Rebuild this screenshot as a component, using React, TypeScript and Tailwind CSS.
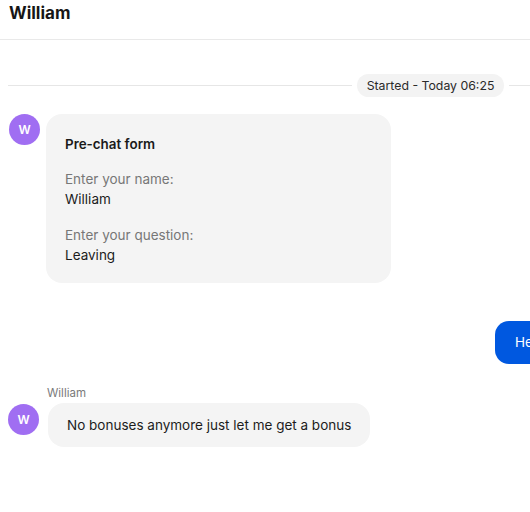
export default function App() {
  return (
    <div className="w-[530px] h-[512px] overflow-hidden bg-white text-[#1c1c1c]" style={{ fontFamily: 'Inter, "Noto Sans", sans-serif' }}>
      {/* Header */}
      <div className="h-10 border-b border-[#e9e9e9] px-[9px] flex items-start">
        <h1 className="text-[17px] leading-[26px] font-bold text-[#161616]">William</h1>
      </div>

      <div className="w-[861px] px-2">
        {/* Divider */}
        <div className="flex items-center gap-[5px] mt-[34px]">
          <div className="flex-1 h-px bg-[#e6e6e6]" />
          <div className="h-[23px] px-[10px] rounded-full bg-[#f3f3f3] text-[12.3px] leading-[23px] text-[#2a2a2a]">
            Started - Today 06:25
          </div>
          <div className="flex-1 h-px bg-[#e6e6e6]" />
        </div>

        {/* Pre-chat form */}
        <div className="flex items-start gap-[6px] mt-[17px] pl-px">
          <div className="w-[31px] h-[31px] rounded-full bg-[#a06ef2] text-white text-[12px] font-semibold flex items-center justify-center">
            W
          </div>
          <div className="w-[345px] rounded-[16px] bg-[#f4f4f4] pl-[19px] pt-5 pb-[18px]">
            <div className="text-[13.4px] leading-5 font-semibold text-[#1a1a1a]">Pre-chat form</div>
            <div className="mt-[15px] text-[13.5px] leading-5 text-[#777777]">Enter your name:</div>
            <div className="text-[13.5px] leading-5 text-[#1c1c1c]">William</div>
            <div className="mt-4 text-[13.5px] leading-5 text-[#777777]">Enter your question:</div>
            <div className="text-[13.5px] leading-5 text-[#1c1c1c]">Leaving</div>
          </div>
        </div>

        {/* Agent bubble */}
        <div className="flex mt-[38px]">
          <div className="ml-[487px] h-[43px] rounded-[14px] bg-[#0058e0] text-white px-5 text-[13.5px] leading-[43px] whitespace-nowrap">
            Hello William, how can I help you today?
          </div>
        </div>

        {/* Visitor message */}
        <div className="mt-[22px] pl-[39px] text-[11.5px] leading-[14px] text-[#7a7a7a]">William</div>
        <div className="flex items-start gap-[9px] mt-[3px]">
          <div className="w-[31px] h-[31px] mt-px rounded-full bg-[#a06ef2] text-white text-[12px] font-semibold flex items-center justify-center">
            W
          </div>
          <div className="rounded-[16px] bg-[#f4f4f4] px-[19px] py-3 text-[13.5px] leading-5 text-[#1c1c1c]">
            No bonuses anymore just let me get a bonus
          </div>
        </div>
      </div>
    </div>
  );
}
